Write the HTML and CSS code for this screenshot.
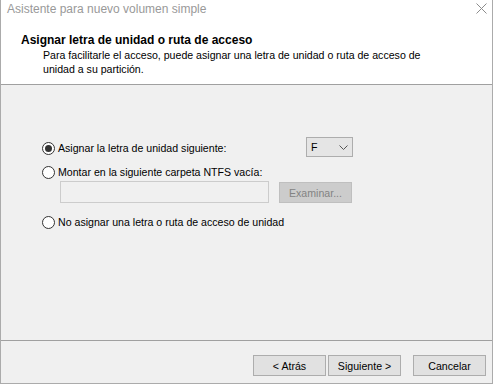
FILE: index.html
```html
<!DOCTYPE html>
<html lang="es">
<head>
  <meta charset="utf-8">
  <title>Asistente para nuevo volumen simple</title>
  <link rel="stylesheet" href="styles.css">
</head>
<body>
  <div class="window">
    <header class="top">
      <div class="titlebar">
        <span class="caption">Asistente para nuevo volumen simple</span>
        <svg class="close" width="11" height="11" viewBox="0 0 11 11">
          <path d="M0.5 0.5 L10.5 10.5 M10.5 0.5 L0.5 10.5" stroke="#8c8c8c" stroke-width="1" fill="none"/>
        </svg>
      </div>
      <div class="heading">
        <h1>Asignar letra de unidad o ruta de acceso</h1>
        <p>Para facilitarle el acceso, puede asignar una letra de unidad o ruta de acceso de unidad a su partición.</p>
      </div>
    </header>

    <main class="content">
      <div class="row-letter">
        <label class="option option-letter"><span class="radio checked"></span>Asignar la letra de unidad siguiente:</label>
        <div class="combo">
          <span>F</span>
          <svg width="9" height="5" viewBox="0 0 9 5">
            <path d="M0.5 0.5 L4.5 4.5 L8.5 0.5" stroke="#555" stroke-width="1" fill="none"/>
          </svg>
        </div>
      </div>

      <label class="option option-mount"><span class="radio"></span>Montar en la siguiente carpeta NTFS vacía:</label>

      <div class="row-path">
        <div class="path-box"></div>
        <button class="btn browse" disabled>Examinar...</button>
      </div>

      <label class="option option-none"><span class="radio"></span>No asignar una letra o ruta de acceso de unidad</label>
    </main>

    <footer class="buttons">
      <button class="btn">&lt; Atrás</button>
      <button class="btn">Siguiente &gt;</button>
      <button class="btn cancel">Cancelar</button>
    </footer>
  </div>
</body>
</html>
```

FILE: styles.css
```css
body {
  margin: 0;
  font-family: 'Liberation Sans', Arial, sans-serif;
  color: #000;
  background: #fff;
}

.window {
  width: 493px;
  height: 384px;
  box-sizing: border-box;
  border: 1px solid #ababab;
  border-top: none;
  display: flex;
  flex-direction: column;
  background: #f0f0f0;
}

.top {
  height: 84px;
  background: #fff;
  border-bottom: 1px solid #a0a0a0;
}

.titlebar {
  display: flex;
  justify-content: space-between;
  padding: 1px 5px 0 6px;
  height: 16px;
}

.caption {
  font-size: 12px;
  line-height: 16px;
  color: #999;
}

.close {
  margin-top: 2px;
}

.heading {
  padding: 16px 0 0 20px;
}

h1 {
  margin: 0;
  font-size: 12px;
  line-height: 15px;
  font-weight: bold;
}

.heading p {
  margin: 0 0 0 22px;
  width: 400px;
  font-size: 10.6px;
  line-height: 14px;
}

.content {
  flex: 1;
  padding: 52px 0 0 41px;
  font-size: 10.6px;
}

.option {
  display: flex;
  align-items: center;
  gap: 3px;
  line-height: 13px;
  height: 13px;
}

.radio {
  width: 13px;
  height: 13px;
  box-sizing: border-box;
  border: 1px solid #333;
  border-radius: 50%;
  background: #fff;
  display: flex;
  align-items: center;
  justify-content: center;
}

.radio.checked::after {
  content: "";
  width: 7px;
  height: 7px;
  border-radius: 50%;
  background: #333;
}

.row-letter {
  display: flex;
  align-items: center;
  height: 20px;
}

.option-letter {
  width: 264px;
  margin-top: 2px;
}

.combo {
  width: 47px;
  height: 20px;
  box-sizing: border-box;
  border: 1px solid #adadad;
  background: #e5e5e5;
  display: flex;
  align-items: center;
  justify-content: space-between;
  padding: 0 4px 0 4px;
  font-size: 10.6px;
}

.option-mount {
  margin-top: 9px;
}

.row-path {
  display: flex;
  align-items: flex-start;
  gap: 10px;
  margin: 2px 0 0 18px;
}

.path-box {
  width: 209px;
  height: 22px;
  box-sizing: border-box;
  border: 1px solid #cccccc;
  background: #f0f0f0;
}

.btn {
  width: 73px;
  height: 21px;
  box-sizing: border-box;
  border: 1px solid #adadad;
  background: #e1e1e1;
  font-family: 'Liberation Sans', Arial, sans-serif;
  font-size: 10.6px;
  color: #000;
  padding: 0;
}

.browse {
  margin-top: 1px;
  background: #cccccc;
  border-color: #bfbfbf;
  color: #838383;
}

.option-none {
  margin-top: 13px;
}

.buttons {
  height: 43px;
  border-top: 1px solid #a0a0a0;
  display: flex;
  justify-content: flex-end;
  align-items: flex-start;
  gap: 2px;
  padding: 14px 6px 0 0;
  box-sizing: border-box;
}

.cancel {
  margin-left: 10px;
}
```
